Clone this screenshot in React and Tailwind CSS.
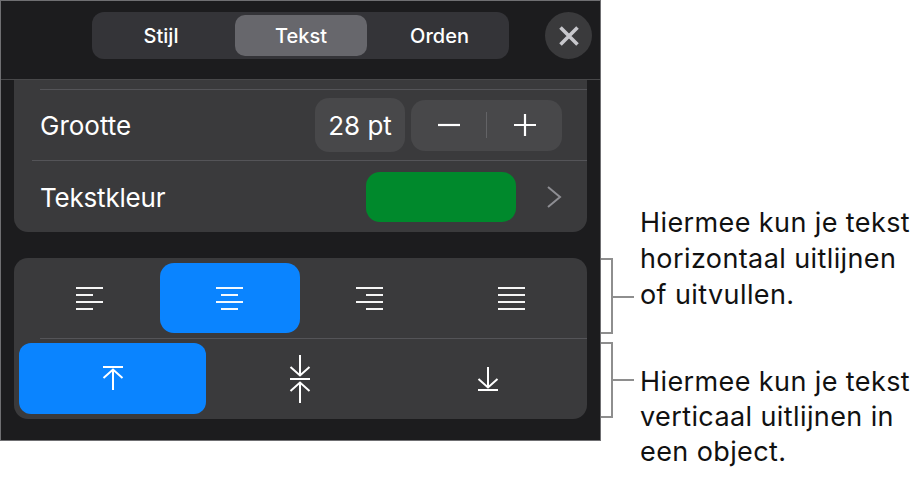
import React from 'react';

const font = { fontFamily: 'Inter, sans-serif' };

const AlignIcon = ({ lines }) => (
  <svg width="28" height="24" viewBox="0 0 28 24" fill="none" stroke="white" strokeWidth="1.9">
    {lines.map((line, i) => (
      <line key={i} x1={line[0]} x2={line[1]} y1={2 + i * 7} y2={2 + i * 7} />
    ))}
  </svg>
);

const ArrowIcon = ({ type }) => (
  <svg width="24" height="50" viewBox="0 0 24 50" fill="none" stroke="white" strokeWidth="2">
    {type === 'top' && (
      <>
        <line x1="2" x2="22" y1="13" y2="13" />
        <path d="M12 36V16M2.5 24L12 15.5L21.5 24" />
      </>
    )}
    {type === 'middle' && (
      <>
        <path d="M12 1V21M2.5 13L12 21.5L21.5 13" />
        <line x1="2" x2="22" y1="25" y2="25" />
        <path d="M12 49V29M2.5 37L12 28.5L21.5 37" />
      </>
    )}
    {type === 'bottom' && (
      <>
        <path d="M12 13V33M2.5 25L12 33.5L21.5 25" />
        <line x1="2" x2="22" y1="36" y2="36" />
      </>
    )}
  </svg>
);

const Bracket = ({ className, stem }) => (
  <div className={`relative w-[12px] h-[76px] border-y-2 border-r-2 border-[#8e8e8e] ${className}`}>
    <div className={`absolute left-[10px] w-[23px] h-[2px] bg-[#8e8e8e] ${stem}`} />
  </div>
);

export default function App() {
  return (
    <div className="w-[918px] h-[478px] bg-white flex overflow-hidden" style={font}>
      <div className="w-[601px] h-[441px] shrink-0 bg-[#1c1c1e] border border-[#6f6f72] flex flex-col">
        {/* Header */}
        <div className="h-[79px] shrink-0 border-b border-[#48484a] flex items-start pt-[11px]">
          <div className="ml-[91px] w-[417px] h-[47px] rounded-[12px] bg-[#343438] flex items-center px-[3px] text-white text-[20px] font-medium">
            <div className="w-[140px] text-center pr-[8px]">Stijl</div>
            <div className="w-[132px] h-[41px] rounded-[10px] bg-[#67676c] flex items-center justify-center">Tekst</div>
            <div className="flex-1 text-center pl-[6px]">Orden</div>
          </div>
          <div className="ml-[36px] w-[47px] h-[47px] rounded-full bg-[#3a3a3c] flex items-center justify-center">
            <svg width="22" height="22" viewBox="0 0 22 22" stroke="#c7c7cc" strokeWidth="3.6">
              <path d="M2.5 2.5L19.5 19.5M19.5 2.5L2.5 19.5" />
            </svg>
          </div>
        </div>

        {/* Grootte / Tekstkleur */}
        <div className="mx-[13px] h-[152px] shrink-0 rounded-b-[14px] bg-[#3a3a3c] flex flex-col text-white text-[26px]">
          <div className="h-[9px] shrink-0 ml-[26px] border-b border-[#545458] box-content" />
          <div className="h-[71px] shrink-0 ml-[18px] border-b border-[#545458] flex items-center pl-[8px]">
            <span className="pt-[1px]">Grootte</span>
            <div className="ml-auto w-[90px] h-[54px] rounded-[14px] bg-[#48484a] flex items-center justify-center">28 pt</div>
            <div className="ml-[6px] mr-[25px] w-[151px] h-[51px] rounded-[14px] bg-[#48484a] flex items-center">
              <div className="flex-1 flex justify-center">
                <svg width="24" height="24" viewBox="0 0 24 24" stroke="white" strokeWidth="2.2"><path d="M1 12H23" /></svg>
              </div>
              <div className="w-px h-[26px] bg-[#636366]" />
              <div className="flex-1 flex justify-center">
                <svg width="24" height="24" viewBox="0 0 24 24" stroke="white" strokeWidth="2.2"><path d="M1 12H23M12 1V23" /></svg>
              </div>
            </div>
          </div>
          <div className="flex-1 flex items-center pl-[26px]">
            <span className="pt-[1px] tracking-[-0.2px]">Tekstkleur</span>
            <div className="ml-auto w-[150px] h-[50px] rounded-[14px] bg-[#00892c]" />
            <svg className="ml-[30px] mr-[25px]" width="16" height="24" viewBox="0 0 16 24" fill="none" stroke="#8e8e93" strokeWidth="2">
              <path d="M2 2L14 12L2 22" />
            </svg>
          </div>
        </div>

        {/* Uitlijnen */}
        <div className="mx-[13px] mt-[26px] h-[161px] shrink-0 rounded-[14px] bg-[#3a3a3c] flex flex-col">
          <div className="h-[80px] shrink-0 flex items-start pt-[5px] pl-[5px]">
            <div className="w-[141px] h-[70px] flex items-center justify-center">
              <AlignIcon lines={[[0, 27], [0, 17], [0, 27], [0, 17]]} />
            </div>
            <div className="w-[140px] h-[70px] rounded-[14px] bg-[#0a84ff] flex items-center justify-center">
              <AlignIcon lines={[[0, 27], [5, 22], [0, 27], [5, 22]]} />
            </div>
            <div className="w-[140px] h-[70px] flex items-center justify-center">
              <AlignIcon lines={[[0, 27], [10, 27], [0, 27], [10, 27]]} />
            </div>
            <div className="w-[143px] h-[70px] flex items-center justify-center">
              <AlignIcon lines={[[0, 27], [0, 27], [0, 27], [0, 27]]} />
            </div>
          </div>
          <div className="h-px shrink-0 ml-[26px] bg-[#545458]" />
          <div className="flex-1 flex items-start pt-[4px] pl-[5px]">
            <div className="w-[187px] h-[71px] rounded-[12px] bg-[#0a84ff] flex items-center justify-center">
              <ArrowIcon type="top" />
            </div>
            <div className="w-[188px] h-[71px] flex items-center justify-center">
              <ArrowIcon type="middle" />
            </div>
            <div className="w-[188px] h-[71px] flex items-center justify-center">
              <ArrowIcon type="bottom" />
            </div>
          </div>
        </div>
      </div>

      {/* Toelichting */}
      <div className="w-[32px] shrink-0 flex flex-col pt-[258px]">
        <Bracket stem="top-[36px]" />
        <Bracket className="mt-[8px]" stem="top-[35px]" />
      </div>
      <div className="ml-[7px] flex flex-col pt-[205px] text-[27px] tracking-[0.4px] text-[#111] whitespace-nowrap">
        <div className="leading-[36px]">
          Hiermee kun je tekst<br />horizontaal uitlijnen<br />of uitvullen.
        </div>
        <div className="mt-[51px] leading-[35px]">
          Hiermee kun je tekst<br />verticaal uitlijnen in<br />een object.
        </div>
      </div>
    </div>
  );
}
